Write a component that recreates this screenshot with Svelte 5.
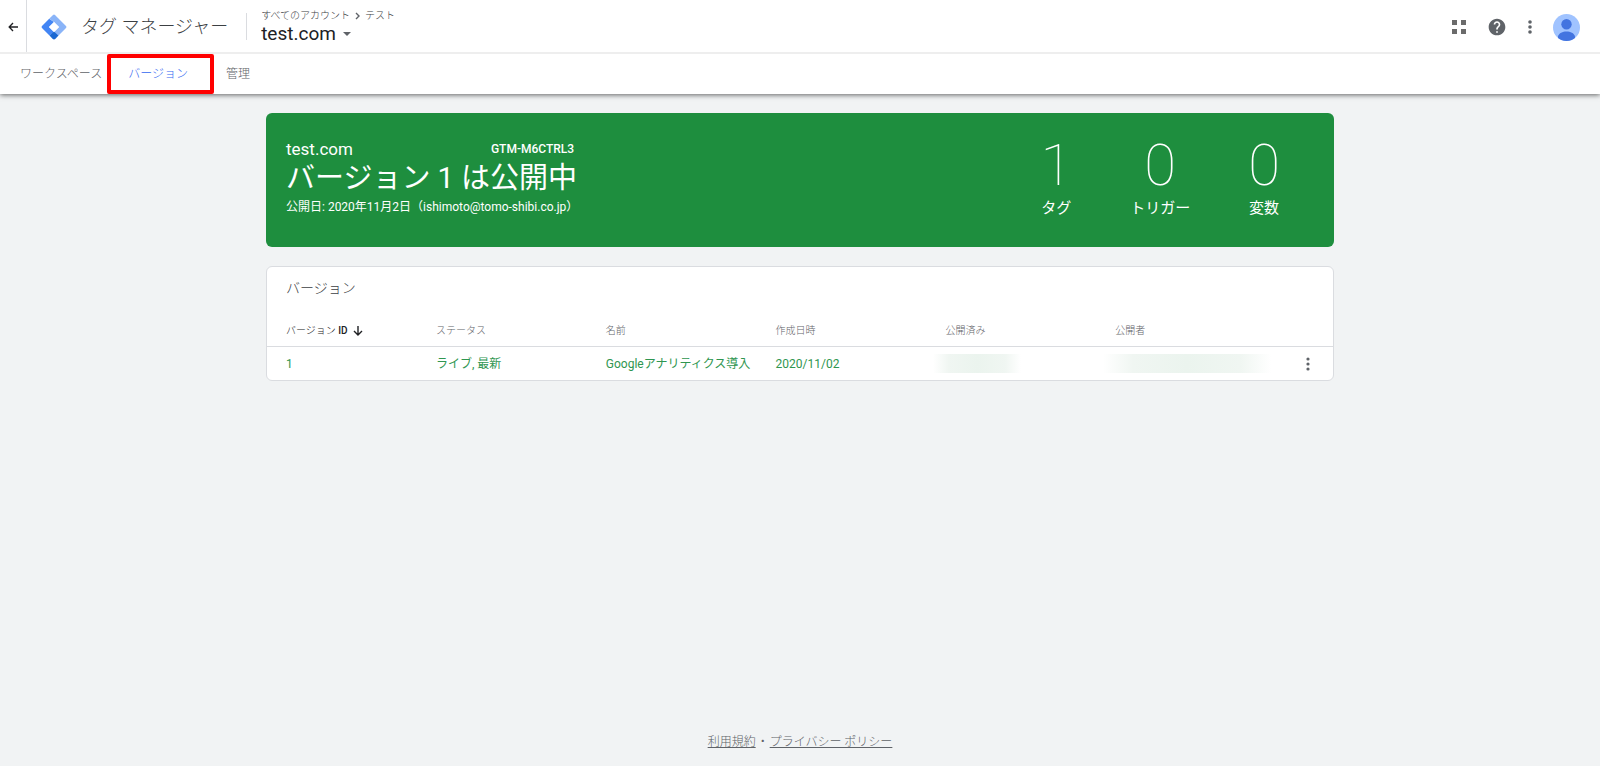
<script>
    let account = "テスト";
    let container = "test.com";

    const tabs = [
        { label: "ワークスペース", active: false },
        { label: "バージョン", active: true },
        { label: "管理", active: false },
    ];

    const counts = [
        { value: 1, label: "タグ" },
        { value: 0, label: "トリガー" },
        { value: 0, label: "変数" },
    ];

    const versions = [
        { id: 1, status: "ライブ, 最新", name: "Googleアナリティクス導入", created: "2020/11/02" },
    ];
</script>

<div class="page">
    <header>
        <div class="top-bar">
            <button class="back" aria-label="戻る">
                <svg width="10" height="10" viewBox="0 0 12 12" fill="none" stroke="#202124" stroke-width="1.6">
                    <path d="M12 6H2M6 1.2L1.4 6L6 10.8" />
                </svg>
            </button>
            <a class="brand" href="#home">
                <svg width="26" height="26" viewBox="0 0 26 26">
                    <!-- 左: 青, 右上: 水色, 下: 濃い青, 中央は白抜き -->
                    <path d="M8.2 4.8L1 12Q0 13 1 14L8.5 21.5L13 18L8 13L13 8Z" fill="#4285f4" />
                    <path d="M8.2 4.8L12 1Q13 0 14 1L25 12Q26 13 25 14L17.5 21.5L13 18L18 13L13 8Z" fill="#8ab4f8" />
                    <path d="M13 17.4L17.5 21.5L14.5 24.8Q13 26 11.5 24.8L8.5 21.5Z" fill="#1967d2" />
                    <path d="M13 8L18 13L13 18L8 13Z" fill="#fff" />
                </svg>
                <span>タグ マネージャー</span>
            </a>
            <span class="divider"></span>
            <div class="switcher">
                <div class="path">
                    <span>すべてのアカウント</span>
                    <svg width="5" height="8" viewBox="0 0 5 8" fill="none" stroke="#5f6368" stroke-width="1.4"><path d="M1 1L4 4L1 7" /></svg>
                    <span>{account}</span>
                </div>
                <button class="container-name">
                    {container}
                    <svg width="8" height="4" viewBox="0 0 8 4"><path d="M0 0H8L4 4Z" fill="#5f6368" /></svg>
                </button>
            </div>
            <div class="tools">
                <button aria-label="アプリ">
                    <svg width="14" height="14" viewBox="0 0 14 14" fill="#6b6b6b">
                        <path d="M0 0H5V5H0ZM9 0H14V5H9ZM0 9H5V14H0ZM9 9H14V14H9Z" />
                    </svg>
                </button>
                <button aria-label="ヘルプ">
                    <svg width="20" height="20" viewBox="0 0 24 24" fill="#5f6368">
                        <path d="M12 2C6.48 2 2 6.48 2 12s4.48 10 10 10 10-4.48 10-10S17.52 2 12 2zm1 17h-2v-2h2v2zm2.07-7.75l-.9.92C13.45 12.9 13 13.5 13 15h-2v-.5c0-1.1.45-2.1 1.17-2.83l1.24-1.26c.37-.36.59-.86.59-1.41 0-1.1-.9-2-2-2s-2 .9-2 2H8c0-2.21 1.79-4 4-4s4 1.79 4 4c0 .88-.36 1.68-.93 2.25z" />
                    </svg>
                </button>
                <button aria-label="その他">
                    <svg width="4" height="14" viewBox="0 0 4 14" fill="#5f6368">
                        <circle cx="2" cy="2" r="1.8" /><circle cx="2" cy="7" r="1.8" /><circle cx="2" cy="12" r="1.8" />
                    </svg>
                </button>
                <button aria-label="アカウント">
                    <svg width="27" height="27" viewBox="0 0 27 27">
                        <clipPath id="avatar"><circle cx="13.5" cy="13.5" r="13.5" /></clipPath>
                        <g clip-path="url(#avatar)">
                            <rect width="27" height="27" fill="#a0c3ff" />
                            <circle cx="13.5" cy="10.3" r="5.2" fill="#4374e0" />
                            <path d="M5 22.5C6 18.8 9.5 17.4 13.5 17.4S21 18.8 22 22.5V27H5Z" fill="#4374e0" />
                        </g>
                    </svg>
                </button>
            </div>
        </div>
        <nav>
            {#each tabs as tab}
                <a href="#tab" class:active={tab.active}>{tab.label}</a>
            {/each}
        </nav>
    </header>

    <main>
        <section class="banner">
            <div class="live">
                <div class="live-top">
                    <span class="site">{container}</span>
                    <span class="gtm">GTM-M6CTRL3</span>
                </div>
                <h1>バージョン 1 は公開中</h1>
                <p>公開日: 2020年11月2日（ishimoto@tomo-shibi.co.jp）</p>
            </div>
            <div class="counts">
                {#each counts as count}
                    <div class="count">
                        <strong>{count.value}</strong>
                        <span>{count.label}</span>
                    </div>
                {/each}
            </div>
        </section>

        <section class="card">
            <h2>バージョン</h2>
            <table>
                <thead>
                    <tr>
                        <th class="id sorted">バージョン <b>ID</b>
                            <svg width="10" height="10" viewBox="0 0 10 10" fill="none" stroke="#202124" stroke-width="1.4"><path d="M5 0V9M1 5L5 9L9 5" /></svg>
                        </th>
                        <th>ステータス</th>
                        <th>名前</th>
                        <th>作成日時</th>
                        <th>公開済み</th>
                        <th>公開者</th>
                        <th class="menu" aria-label="操作"></th>
                    </tr>
                </thead>
                <tbody>
                    {#each versions as version}
                        <tr>
                            <td class="id"><a href="#version">{version.id}</a></td>
                            <td>{version.status}</td>
                            <td>{version.name}</td>
                            <td>{version.created}</td>
                            <td><div class="masked short"></div></td>
                            <td><div class="masked"></div></td>
                            <td class="menu">
                                <button aria-label="操作メニュー">
                                    <svg width="4" height="14" viewBox="0 0 4 14" fill="#5f6368">
                                        <circle cx="2" cy="2" r="1.6" /><circle cx="2" cy="7" r="1.6" /><circle cx="2" cy="12" r="1.6" />
                                    </svg>
                                </button>
                            </td>
                        </tr>
                    {/each}
                </tbody>
            </table>
        </section>
    </main>

    <footer>
        <a href="#terms">利用規約</a>
        <span>・</span>
        <a href="#privacy">プライバシー ポリシー</a>
    </footer>
</div>

<style>
    :global(body) {
        margin: 0;
        background: #f1f3f4;
    }

    .page {
        display: flex;
        flex-direction: column;
        min-height: 100vh;
        font-family: Roboto, "Noto Sans CJK JP", sans-serif;
        font-size: 12px;
        line-height: 16px;
        color: #5f6368;
    }

    button {
        display: flex;
        align-items: center;
        padding: 0;
        border: none;
        background: none;
        font: inherit;
        color: inherit;
        cursor: pointer;
    }

    a {
        color: inherit;
        text-decoration: none;
    }

    header {
        background: #fff;
        box-shadow: 0 1px 5px rgba(0, 0, 0, 0.6);
    }

    .top-bar {
        display: flex;
        align-items: center;
        height: 52px;
        border-bottom: 2px solid #eeeeee;
    }

    .back {
        justify-content: center;
        width: 27px;
        height: 52px;
        padding-top: 2px;
        border-right: 1px solid #dadce0;
    }

    .brand {
        display: flex;
        align-items: center;
        gap: 14px;
        margin-left: 14px;
        padding-top: 2px;
        font-size: 18px;
        line-height: 26px;
        font-weight: 300;
        color: #3c4043;
    }

    .divider {
        width: 1px;
        height: 27px;
        margin: 0 14px 0 18px;
        background: #dadce0;
    }

    .switcher {
        padding-top: 3px;
    }

    .path {
        display: flex;
        align-items: center;
        gap: 5px;
        font-size: 10px;
        line-height: 12px;
        font-weight: 300;
        color: #3c4043;
    }

    .container-name {
        gap: 7px;
        font-size: 19px;
        line-height: 24px;
        color: #202124;
    }

    .tools {
        display: flex;
        align-items: center;
        gap: 21px;
        margin-left: auto;
        margin-right: 20px;
        padding-top: 2px;
    }

    nav {
        display: flex;
        height: 40px;
        padding-left: 20px;
        font-weight: 300;
    }

    nav a {
        display: flex;
        align-items: center;
        padding-right: 5px;
    }

    nav a.active {
        padding: 0 22px 0 17px;
        margin-right: 12px;
        border: 4px solid #ff0000;
        border-radius: 2px;
        color: #3367f0;
    }

    main {
        flex: 1;
        width: 100%;
        max-width: 1068px;
        margin: 0 auto;
        padding-top: 19px;
    }

    .banner {
        display: flex;
        justify-content: space-between;
        padding: 24px 54px 26px 20px;
        border-radius: 6px;
        background: #1e8e3e;
        color: #fff;
    }

    .live-top {
        display: flex;
        align-items: center;
        gap: 138px;
    }

    .site {
        font-size: 17px;
        line-height: 24px;
    }

    .gtm {
        font-weight: 500;
    }

    h1 {
        margin: 0;
        font-size: 29px;
        line-height: 34px;
        font-weight: 400;
    }

    .banner p {
        margin: 4px 0 0;
    }

    .counts {
        display: flex;
        gap: 58px;
    }

    .count {
        display: flex;
        flex-direction: column;
        align-items: center;
        font-size: 15px;
        line-height: 26px;
    }

    .count strong {
        font-size: 58px;
        line-height: 56px;
        font-weight: 100;
    }

    .count span {
        padding-top: 2px;
    }

    .card {
        margin-top: 19px;
        border: 1px solid #dadce0;
        border-radius: 6px;
        background: #fff;
    }

    h2 {
        margin: 0;
        padding: 11px 19px;
        font-size: 14px;
        line-height: 20px;
        font-weight: 300;
        color: #3c4043;
    }

    table {
        width: 100%;
        table-layout: fixed;
        border-collapse: collapse;
    }

    th,
    td {
        padding: 0;
        text-align: left;
    }

    th {
        height: 31px;
        padding-top: 6px;
        border-bottom: 1px solid #dadce0;
        font-size: 10px;
        font-weight: 300;
    }

    td {
        height: 33px;
        color: #2f9650;
    }

    th.id,
    td.id {
        width: 150px;
        padding-left: 19px;
    }

    .sorted {
        color: #202124;
    }

    .sorted b {
        font-weight: 500;
    }

    .sorted svg {
        margin-left: 3px;
        vertical-align: middle;
    }

    .menu {
        width: 48px;
    }

    .menu button {
        margin-left: 21px;
    }

    .masked {
        height: 19px;
        width: 168px;
        margin-left: -12px;
        background: linear-gradient(90deg, transparent, #f0f6f2 18%, #ebf4ee 50%, #f0f6f2 82%, transparent);
    }

    .masked.short {
        width: 88px;
    }

    footer {
        display: flex;
        justify-content: center;
        gap: 1px;
        padding: 17px 0 16px;
        font-weight: 300;
    }

    footer a {
        text-decoration: underline;
    }
</style>
